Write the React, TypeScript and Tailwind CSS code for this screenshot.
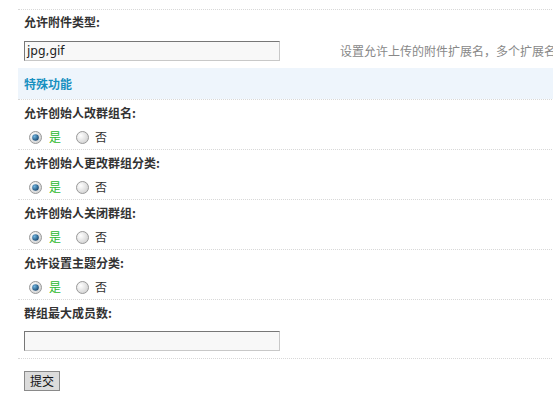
import React, { useId } from 'react';

const font = "font-['SimSun','Noto_Sans_CJK_SC',sans-serif]";

const Radio: React.FC<{ checked?: boolean }> = ({ checked }) => {
  const id = useId().replace(/:/g, '');
  return (
    <svg width="13" height="13" viewBox="0 0 13 13" className="shrink-0">
      <defs>
        <radialGradient id={`bg${id}`} cx="0.35" cy="0.35" r="0.75">
          <stop offset="0%" stopColor="#ffffff" />
          <stop offset="100%" stopColor="#cfcfcf" />
        </radialGradient>
        <radialGradient id={`dot${id}`} cx="0.35" cy="0.35" r="0.7">
          <stop offset="0%" stopColor="#6fb4e0" />
          <stop offset="100%" stopColor="#17466e" />
        </radialGradient>
      </defs>
      <circle cx="6.5" cy="6.5" r="6" fill={`url(#bg${id})`} stroke="#999" strokeWidth="1" />
      {checked && <circle cx="6.5" cy="6.5" r="3.3" fill={`url(#dot${id})`} />}
    </svg>
  );
};

const Label: React.FC<{ children: React.ReactNode }> = ({ children }) => (
  <div className="pl-[6px] text-[12px] leading-[16px] font-bold text-[#333]">{children}</div>
);

const TextBox: React.FC<{ value?: string }> = ({ value }) => (
  <div className="w-[256px] h-[20px] bg-[#f8f8f8] border border-t-[#777] border-l-[#777] border-r-[#c8c8c8] border-b-[#c8c8c8] pl-[2px] flex items-center text-[12px] text-[#222] font-['DejaVu_Sans',sans-serif]">
    {value}
  </div>
);

const YesNoRow: React.FC<{ label: string }> = ({ label }) => (
  <div className="border-t border-dotted border-[#d8d8d8] pt-[5px] pb-[4px]">
    <Label>{label}</Label>
    <div className="mt-[8px] flex items-center h-[16px] pl-[11px] text-[12px]">
      <Radio checked />
      <span className="ml-[7px] text-[#2db82d]">是</span>
      <span className="ml-[15px]"><Radio /></span>
      <span className="ml-[6px] text-[#333]">否</span>
    </div>
  </div>
);

export default function App() {
  const rows = ['允许创始人改群组名:', '允许创始人更改群组分类:', '允许创始人关闭群组:', '允许设置主题分类:'];

  return (
    <div className={`w-full h-[403px] overflow-hidden bg-white ${font}`}>
      <div className="w-[800px] pl-[18px] pt-[9px]">
        <div className="border-t border-dotted border-[#d8d8d8] pt-[4px] pb-[7px]">
          <Label>允许附件类型:</Label>
          <div className="mt-[11px] flex items-center pl-[6px]">
            <TextBox value="jpg,gif" />
            <span className="ml-[60px] text-[12px] text-[#888] whitespace-nowrap">
              设置允许上传的附件扩展名，多个扩展名之间用半角逗号 "," 分割
            </span>
          </div>
        </div>

        <div className="h-[31px] bg-[#eef5fc] pl-[6px] flex items-center text-[12px] font-bold text-[#1790c0]">
          特殊功能
        </div>

        {rows.map((r) => (
          <YesNoRow key={r} label={r} />
        ))}

        <div className="border-t border-dotted border-[#d8d8d8] pt-[5px] pb-[7px]">
          <Label>群组最大成员数:</Label>
          <div className="mt-[10px] pl-[6px]">
            <TextBox />
          </div>
        </div>

        <div className="border-t border-dotted border-[#d8d8d8] pt-[8px] pl-[6px]">
          <button className="w-[36px] h-[20px] bg-[#dcdcdc] border border-[#8a8a8a] text-[12px] text-[#111] leading-none">
            提交
          </button>
        </div>
      </div>
    </div>
  );
}
